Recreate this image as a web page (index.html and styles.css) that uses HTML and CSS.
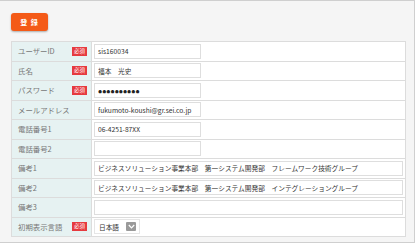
FILE: index.html
```html
<!DOCTYPE html>
<html lang="ja">
<head>
    <meta charset="UTF-8">
    <title>ユーザー登録</title>
    <link rel="stylesheet" href="styles.css">
</head>
<body>
    <div class="panel">
        <button type="button" class="btn-entry">登 録</button>

        <table class="form-table">
            <tr>
                <th><div class="label">ユーザーID<span class="req">必須</span></div></th>
                <td><input type="text" class="field" value="sis160034"></td>
            </tr>
            <tr>
                <th><div class="label">氏名<span class="req">必須</span></div></th>
                <td><input type="text" class="field" value="福本　光史"></td>
            </tr>
            <tr>
                <th><div class="label">パスワード<span class="req">必須</span></div></th>
                <td><input type="password" class="field pass" value="xxxxxxxxxx"></td>
            </tr>
            <tr>
                <th><div class="label">メールアドレス</div></th>
                <td><input type="text" class="field" value="fukumoto-koushi@gr.sei.co.jp"></td>
            </tr>
            <tr>
                <th><div class="label">電話番号1</div></th>
                <td><input type="text" class="field" value="06-4251-87XX"></td>
            </tr>
            <tr>
                <th><div class="label">電話番号2</div></th>
                <td><input type="text" class="field" value=""></td>
            </tr>
            <tr>
                <th><div class="label">備考1</div></th>
                <td><input type="text" class="field wide" value="ビジネスソリューション事業本部　第一システム開発部　フレームワーク技術グループ"></td>
            </tr>
            <tr>
                <th><div class="label">備考2</div></th>
                <td><input type="text" class="field wide" value="ビジネスソリューション事業本部　第一システム開発部　インテグレーショングループ"></td>
            </tr>
            <tr>
                <th><div class="label">備考3</div></th>
                <td><input type="text" class="field wide" value=""></td>
            </tr>
            <tr>
                <th><div class="label">初期表示言語<span class="req">必須</span></div></th>
                <td>
                    <div class="select">
                        <span>日本語</span>
                        <span class="arrow">
                            <svg width="7" height="5" viewBox="0 0 7 5"><path d="M0.8 1 L3.5 3.8 L6.2 1" fill="none" stroke="#fff" stroke-width="1.2"/></svg>
                        </span>
                    </div>
                </td>
            </tr>
        </table>
    </div>
</body>
</html>
```

FILE: styles.css
```css
body {
    margin: 0;
    background: #fff;
    font-family: "Noto Sans CJK JP", "Liberation Sans", sans-serif;
}

.panel {
    box-sizing: border-box;
    width: 415px;
    height: 243px;
    padding: 12px 0 0 11px;
    background: #f5f5f5;
    border-top: 1px solid #cfcfcf;
    border-right: 1px solid #cfcfcf;
    border-bottom: 1px solid #cfcfcf;
    overflow: hidden;
}

.btn-entry {
    display: block;
    width: 37px;
    height: 18px;
    padding: 0;
    border: none;
    border-radius: 3px;
    background: #f45a17;
    color: #fff;
    font-family: inherit;
    font-size: 7px;
    font-weight: bold;
    letter-spacing: 1px;
    box-shadow: 0 1px 2px rgba(0,0,0,0.3);
    cursor: pointer;
}

.form-table {
    margin-top: 10px;
    width: 395px;
    border-collapse: collapse;
    border: 1px solid #dcdcdc;
}

.form-table tr {
    height: 19.5px;
}

.form-table th,
.form-table td {
    padding: 0;
    border-top: 1px solid #dcdcdc;
    line-height: 0;
}

.form-table th {
    width: 79px;
    background: #e6f2f2;
    border-right: 1px solid #dcdcdc;
    font-weight: normal;
    text-align: left;
}

.form-table td {
    background: #fff;
    padding-left: 2px;
}

.label {
    display: flex;
    align-items: center;
    justify-content: space-between;
    padding: 0 4px 0 6px;
    color: #777;
    font-size: 7.4px;
    line-height: 10px;
}

.req {
    display: inline-block;
    width: 15px;
    height: 9px;
    background: #e63a3f;
    color: #fff;
    font-size: 5.5px;
    line-height: 9px;
    text-align: center;
}

.field {
    display: block;
    box-sizing: border-box;
    width: 107px;
    height: 15px;
    margin: 0;
    padding: 0 0 0 3px;
    border: 1px solid #dedede;
    background: #fff;
    color: #333;
    font-family: "Noto Sans CJK JP", "Liberation Sans", sans-serif;
    font-size: 6.7px;
    outline: none;
}

.field.wide {
    width: 309px;
}

.field.pass {
    font-size: 11px;
    font-weight: bold;
    color: #222;
    letter-spacing: 0;
}

.select {
    display: flex;
    align-items: center;
    gap: 7px;
    box-sizing: border-box;
    width: max-content;
    height: 15px;
    padding: 0 3px 0 4px;
    border: 1px solid #e6e6e6;
    color: #333;
    font-size: 6.7px;
    line-height: 10px;
}

.arrow {
    display: flex;
    align-items: center;
    justify-content: center;
    width: 10px;
    height: 9px;
    background: #9a9a9a;
    border-radius: 1px;
}
```
